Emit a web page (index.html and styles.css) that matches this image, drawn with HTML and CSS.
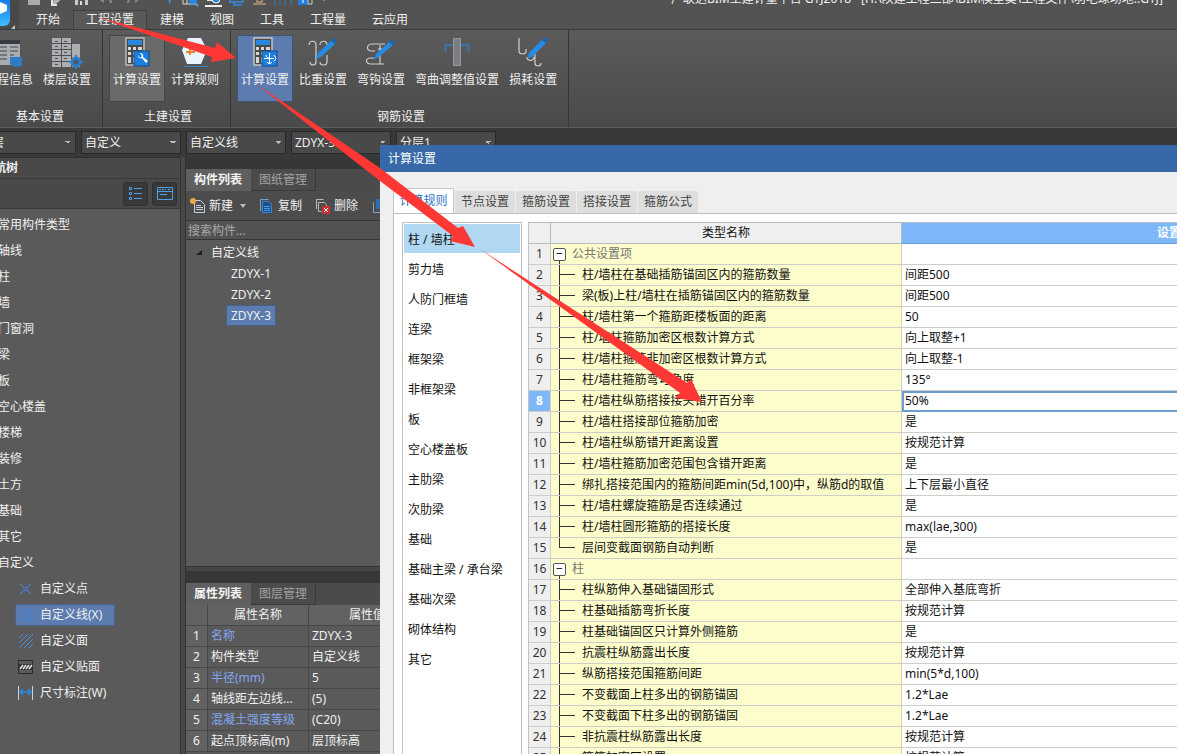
FILE: index.html
```html
<!DOCTYPE html>
<html lang="zh-CN">
<head>
<meta charset="utf-8">
<title>计算设置</title>
<link rel="stylesheet" href="styles.css">
</head>
<body>
<div class="desktop">
<div class="app">
  <header class="top">
    <div class="logo"><svg width="44" height="52" viewBox="0 0 44 52"><defs><linearGradient id="lg" x1="0" y1="0" x2="0" y2="1"><stop offset="0" stop-color="#0d63c8"/><stop offset=".6" stop-color="#1c8df0"/><stop offset="1" stop-color="#3fc0ff"/></linearGradient></defs><rect x="0" y="4" width="35" height="42" rx="6" fill="url(#lg)"/><path d="M25 22l7 3v6l-7 3z" fill="#fff"/><path d="M40 45v4h-4z" fill="#c8c8c8"/></svg></div>
    <div class="head-main">
      <div class="titlebar">
        <svg class="quick" width="300" height="16" viewBox="0 0 300 16">
          <path d="M1 0h12v14h-12z" fill="#a9acb0"/><path d="M3 3h8v6H3z" fill="#5d6065"/>
          <path d="M24 13l9-12 5 4-9 8z" fill="#aeb6c0"/><path d="M25 4v10h5" fill="none" stroke="#e2e2e2" stroke-width="2"/>
          <path d="M48 1h13v13H48z" fill="#c9c9c9"/><path d="M51 2h7v4h-7zM51 9h7v5h-7z" fill="#555"/><path d="M53 10h2v4h-2z" fill="#ddd"/>
          <path d="M84 12c0-5-5-6-9-6M77 2l-5 5 5 4" fill="none" stroke="#8b8b8b" stroke-width="2"/><path d="M89 6h5l-2.500 3z" fill="#aaa"/>
          <path d="M101 12c0-5 5-6 9-6M108 2l5 5-5 4" fill="none" stroke="#858585" stroke-width="2"/><path d="M121 6h5l-2.500 3z" fill="#aaa"/>
          <path d="M139 3l9 4-4 2-1 5-4-11z" fill="#3b8bd8"/>
          <path d="M156 1h12v12h-12zM156 5h12M160 1v12" fill="none" stroke="#d8dce0"/><circle cx="166" cy="9" r="4" fill="#2688e8"/><path d="M168 12l3 3" stroke="#4ca0ef" stroke-width="2"/>
          <path d="M180 1h12v9h-12z" fill="#e6e6e6"/><circle cx="189" cy="8" r="4" fill="#2a83d8" stroke="#fff"/><path d="M178 15h17" stroke="#eee" stroke-width="2"/>
          <path d="M203 2h13v9h-13zM207 11v3h8" fill="none" stroke="#387cc2" stroke-width="2"/>
          <path d="M226 13h13M230 8h5v3h-5z" fill="none" stroke="#b49b76" stroke-width="1.500"/>
          <path d="M246 5h20M248 2v13M253 5v9M258 2v13M264 5v9" fill="none" stroke="#3d7eb8"/>
          <path d="M271 2h10v12h-10z" fill="#247fda"/><path d="M276 4v8M272 8h8" stroke="#fff"/><path d="M281 4h4v9h-4z" fill="none" stroke="#ccc"/><path d="M294 6h6l-3 4z" fill="#ddd"/>
        </svg>
        <span class="doc-title">广联达BIM土建计量平台 GTJ2018 - [H:\陕建工程二部\BIM模型类\工程文件\羽毛球场地..GTJ]</span>
      </div>
      <nav class="menu"><button>开始</button><button class="on">工程设置</button><button>建模</button><button>视图</button><button>工具</button><button>工程量</button><button>云应用</button></nav>
    </div>
  </header>

  <section class="ribbon">
    <div class="group">
      <div class="tools">
        <button class="tool"><svg width="32" height="32" viewBox="0 0 32 32"><path d="M3 3h24v25H3z" fill="#a9acb0"/><path d="M3 3h24v4H3z" fill="#353b42"/><path d="M6 10h8M6 14h8M6 18h8M6 22h8M17 10h8M17 14h8M17 18h4" stroke="#3e4247"/><path d="M17 20h12v9l-8 1-4-3z" fill="#2d7cc4"/></svg>工程信息</button>
        <button class="tool"><svg width="32" height="32" viewBox="0 0 32 32"><path d="M1 1h19v29H1zM20 7h9v23h-9z" fill="#abadb1"/><path d="M1 6.500h19M1 12.500h19M1 18.500h19M1 24.500h19M10.500 1v29M20.500 1v29M4 4.500h3M13 4.500h3M4 9.500h3M13 9.500h3M4 15.500h3M13 15.500h3M4 21.500h3M13 21.500h3M4 27.500h3" stroke="#4d5055"/><circle cx="25" cy="25" r="4" fill="#4b5a68" stroke="#2b7fca" stroke-width="3"/><path d="M25 18v3M25 29v3M18 25h3M29 25h3" stroke="#2b7fca" stroke-width="2"/></svg>楼层设置</button>
      </div>
      <div class="caption">基本设置</div>
    </div>
    <div class="group">
      <div class="tools">
        <button class="tool hover"><svg width="32" height="32" viewBox="0 0 32 32"><path d="M5 1h18v27H5z" fill="#4a4a4a" stroke="#bcbcbc" stroke-width="1.500"/><path d="M7 3h14v5H7z" fill="#2b86dd"/><path d="M7 10h3v3H7zM12 10h3v3h-3zM17 10h4v3h-4zM7 15h3v3H7zM12 15h3v3h-3zM7 20h3v6H7zM12 20h2v6h-2z" fill="#d7d7d7"/><path d="M13 14h15v15H13z" fill="#1a80e2" stroke="#174a80"/><path d="M17 18c0 3 2 4 4 3l4 5 2-2-5-4c1-2-1-4-3-4l2 3-2 2z" fill="#fff"/></svg>计算设置</button>
        <button class="tool"><svg width="32" height="32" viewBox="0 0 32 32"><path d="M9 1h13l6 12-6 14H8L3 13z" fill="#e9f4ff"/><path d="M7 15h9M11 10v8" stroke="#e78424" stroke-width="2"/><path d="M5 29.500h24" stroke="#3e87c7"/></svg>计算规则</button>
      </div>
      <div class="caption">土建设置</div>
    </div>
    <div class="group">
      <div class="tools">
        <button class="tool on"><svg width="32" height="32" viewBox="0 0 32 32"><path d="M5 1h18v27H5z" fill="#4a4a4a" stroke="#c6c6c6" stroke-width="1.500"/><path d="M7 3h14v5H7z" fill="#2b86dd"/><path d="M7 10h3v3H7zM12 10h3v3h-3zM17 10h4v3h-4zM7 15h3v3H7zM12 15h3v3h-3zM7 20h3v6H7zM12 20h2v6h-2z" fill="#d7d7d7"/><path d="M13 14h15v15H13z" fill="#1a80e2" stroke="#174a80"/><path d="M15 21.500h10M20.500 16v11M17 18c0 2 1 3 3 3M25 18l2 3.500-2 3M18 25c1 2 4 2 5 0" fill="none" stroke="#fff"/></svg>计算设置</button>
        <button class="tool"><svg width="32" height="32" viewBox="0 0 32 32"><path d="M2 8c0-5 7-5 7 0v17c0 4-6 4-6 0M13 8c0-5 7-5 7 0M20 18v7c0 4-7 4-7 0" fill="none" stroke="#cfcfcf" stroke-width="1.200"/><path d="M9 22l2-6L24 4l4 3-14 13z" fill="#258be5"/><path d="M24 4l3-3 3 3-2 3z" fill="#1667ae"/></svg>比重设置</button>
        <button class="tool"><svg width="32" height="32" viewBox="0 0 32 32"><path d="M20 7H7c-6 0-6 7 0 7h3M19 27H6c-6 0-6-6 0-6h3M15 8v19M13 12h5" fill="none" stroke="#cfcfcf" stroke-width="1.200"/><path d="M9 23l2-6L24 5l4 3-14 12z" fill="#258be5"/><path d="M24 5l3-3 3 3-2 3z" fill="#1667ae"/></svg>弯钩设置</button>
        <button class="tool"><svg width="32" height="32" viewBox="0 0 32 32"><path d="M4.500 15V8h23v7" fill="none" stroke="#2c7fc8" stroke-width="1.500"/><path d="M12.500 1.500h7v27h-7z" fill="#7b7f84" stroke="#96999c"/></svg>弯曲调整值设置</button>
        <button class="tool"><svg width="32" height="32" viewBox="0 0 32 32"><path d="M2 1v13c0 4 7 4 7 0v-2M10 20c0 4 6 5 7 0M18 17v9c0 4 6 4 6 0" fill="none" stroke="#cfcfcf" stroke-width="1.200"/><path d="M10 21l2-5L25 3l4 3-14 14z" fill="#258be5"/><path d="M25 3l3-3 3 3-2 3z" fill="#1667ae"/></svg>损耗设置</button>
      </div>
      <div class="caption">钢筋设置</div>
    </div>
  </section>

  <div class="pickers">
    <select aria-label="楼层"><option>首层</option></select>
    <select aria-label="类别"><option>自定义</option></select>
    <select aria-label="类型"><option>自定义线</option></select>
    <select aria-label="构件"><option>ZDYX-3</option></select>
    <select aria-label="分层"><option>分层1</option></select>
  </div>

  <div class="work">
    <aside class="navtree">
      <h2>导航树</h2>
      <div class="nav-tools">
        <button aria-label="列表"><svg width="16" height="16" viewBox="0 0 16 16" fill="none" stroke="#4d9fe6"><path d="M1.500 1.500h2v2h-2zM1.500 6.500h2v2h-2zM1.500 11.500h2v2h-2zM6 2.500h8M6 7.500h8M6 12.500h8"/></svg></button>
        <button aria-label="面板"><svg width="16" height="16" viewBox="0 0 16 16" fill="none" stroke="#4d9fe6"><path d="M.5 1.500h15v12H.5zM.5 5.500h15M3 8.500h7"/><path d="M2 3.500h7M11 3.500h3" stroke-dasharray="2 1"/></svg></button>
      </div>
      <ul class="kinds">
        <li>常用构件类型</li><li>轴线</li><li>柱</li><li>墙</li><li>门窗洞</li><li>梁</li><li>板</li><li>空心楼盖</li><li>楼梯</li><li>装修</li><li>土方</li><li>基础</li><li>其它</li><li>自定义</li>
        <li class="sub"><span><svg width="16" height="16" viewBox="0 0 16 16"><path d="M2 3l11 10M13 3L2 13" stroke="#5b86e0" fill="none"/><path d="M6 6.500h3v3H6z" fill="#5a5a5a" stroke="#3f7be0"/></svg>自定义点</span></li>
        <li class="sub on"><span><svg width="16" height="16" viewBox="0 0 16 16"><path d="M3 3h10v10H3z" fill="none" stroke="#4180d0" stroke-dasharray="3 2" stroke-width="2"/></svg>自定义线(X)</span></li>
        <li class="sub"><span><svg width="16" height="16" viewBox="0 0 16 16"><path d="M1 5l4-4M1 10l9-9M1 15L15 1M6 15l9-9M11 15l4-4" stroke="#4a90d6"/></svg>自定义面</span></li>
        <li class="sub"><span><svg width="16" height="16" viewBox="0 0 16 16"><path d="M.5 1.500h14v13H.5z" fill="#5a5a5a" stroke="#2c2c2c"/><path d="M1 5h13v6H1z" fill="#333"/><path d="M2 10l3-4M5 10l3-4M8 10l3-4M11 10l3-4" stroke="#e5e5e5" stroke-width="1.500"/></svg>自定义贴面</span></li>
        <li class="sub"><span><svg width="16" height="16" viewBox="0 0 16 16"><path d="M.5 1v14M14.500 1v14" stroke="#c9d4de"/><path d="M2 7h11M5 4L2 7l3 3M10 4l3 3-3 3" fill="none" stroke="#2c8ae8" stroke-width="1.500"/></svg>尺寸标注(W)</span></li>
      </ul>
    </aside>

    <div class="side">
      <section class="pane members">
        <div class="pane-tabs"><button class="on">构件列表</button><button>图纸管理</button></div>
        <div class="pane-tools">
          <button><svg width="16" height="16" viewBox="0 0 16 16"><path d="M4.500 2.500h6l4 4v8h-10zM6 7.500h5M6 9.500h7M6 11.500h7" fill="#4a4f55" stroke="#c9ccd0"/><circle cx="3" cy="3" r="3" fill="#f0a640"/></svg>新建<svg class="caret" width="6" height="4" viewBox="0 0 6 4"><path d="M0 0h6L3 4z" fill="#bbb"/></svg></button>
          <button><svg width="16" height="16" viewBox="0 0 16 16"><path d="M1.500 13V1.500h8" fill="none" stroke="#6fa4d8"/><path d="M3.500 3.500h6l3 3v8h-9z" fill="#234d7d" stroke="#2f86dc"/><path d="M5 8.500h6M5 10.500h6M5 12.500h6" stroke="#4a9be6"/></svg>复制</button>
          <button><svg width="16" height="16" viewBox="0 0 16 16"><path d="M1.500 11V1.500h7M3.500 13.500V4.500h6l2 2v2M3.500 13.500h3" fill="none" stroke="#b9b9b9"/><path d="M7 8h8v8H7z" fill="#c92f33"/><path d="M9 10l4 4M13 10l-4 4" stroke="#fff"/></svg>删除</button>
          <button aria-label="层间复制"><svg width="16" height="16" viewBox="0 0 16 16"><path d="M5 1h9v10H5z" fill="#2f6fae"/><path d="M2.500 4v10.500h9" fill="none" stroke="#7ea2c6"/></svg></button>
        </div>
        <input class="search" type="text" placeholder="搜索构件..." aria-label="搜索构件">
        <ul class="tree">
          <li class="root"><svg width="7" height="7" viewBox="0 0 7 7"><path d="M6 1v5H0z" fill="#1f1f1f"/></svg>自定义线</li>
          <li><span>ZDYX-1</span></li><li><span>ZDYX-2</span></li><li><span class="on">ZDYX-3</span></li>
        </ul>
      </section>
      <section class="pane props">
        <div class="pane-tabs"><button class="on">属性列表</button><button>图层管理</button></div>
        <table>
          <colgroup><col class="c-no"><col class="c-key"><col></colgroup>
          <tr><th></th><th>属性名称</th><th>属性值</th></tr>
          <tr><th>1</th><td class="key">名称</td><td>ZDYX-3</td></tr>
          <tr><th>2</th><td>构件类型</td><td>自定义线</td></tr>
          <tr><th>3</th><td class="key">半径(mm)</td><td>5</td></tr>
          <tr><th>4</th><td>轴线距左边线...</td><td>(5)</td></tr>
          <tr><th>5</th><td class="key">混凝土强度等级</td><td>(C20)</td></tr>
          <tr><th>6</th><td>起点顶标高(m)</td><td>层顶标高</td></tr>
        </table>
      </section>
    </div>
  </div>
</div>

<div class="dialog" role="dialog" aria-labelledby="dlg">
  <h1 id="dlg">计算设置</h1>
  <div class="dlg-body">
    <div class="dlg-tabs"><button class="on">计算规则</button><button>节点设置</button><button>箍筋设置</button><button>搭接设置</button><button>箍筋公式</button></div>
    <div class="dlg-page">
      <ul class="cats">
        <li class="on">柱 / 墙柱</li><li>剪力墙</li><li>人防门框墙</li><li>连梁</li><li>框架梁</li><li>非框架梁</li><li>板</li><li>空心楼盖板</li><li>主肋梁</li><li>次肋梁</li><li>基础</li><li>基础主梁 / 承台梁</li><li>基础次梁</li><li>砌体结构</li><li>其它</li>
      </ul>
      <div class="grid">
        <table>
          <colgroup><col class="g-no"><col class="g-name"><col></colgroup>
          <tr class="hd"><th></th><th>类型名称</th><th class="sel">设置内容</th></tr>
          <tr class="cat"><th>1</th><td><button aria-label="收起">−</button>公共设置项</td><td></td></tr>
          <tr><th>2</th><td>柱/墙柱在基础插筋锚固区内的箍筋数量</td><td>间距500</td></tr>
          <tr><th>3</th><td>梁(板)上柱/墙柱在插筋锚固区内的箍筋数量</td><td>间距500</td></tr>
          <tr><th>4</th><td>柱/墙柱第一个箍筋距楼板面的距离</td><td>50</td></tr>
          <tr><th>5</th><td>柱/墙柱箍筋加密区根数计算方式</td><td>向上取整+1</td></tr>
          <tr><th>6</th><td>柱/墙柱箍筋非加密区根数计算方式</td><td>向上取整-1</td></tr>
          <tr><th>7</th><td>柱/墙柱箍筋弯勾角度</td><td>135°</td></tr>
          <tr class="cur"><th>8</th><td>柱/墙柱纵筋搭接接头错开百分率</td><td>50%</td></tr>
          <tr><th>9</th><td>柱/墙柱搭接部位箍筋加密</td><td>是</td></tr>
          <tr><th>10</th><td>柱/墙柱纵筋错开距离设置</td><td>按规范计算</td></tr>
          <tr><th>11</th><td>柱/墙柱箍筋加密范围包含错开距离</td><td>是</td></tr>
          <tr><th>12</th><td>绑扎搭接范围内的箍筋间距min(5d,100)中，纵筋d的取值</td><td>上下层最小直径</td></tr>
          <tr><th>13</th><td>柱/墙柱螺旋箍筋是否连续通过</td><td>是</td></tr>
          <tr><th>14</th><td>柱/墙柱圆形箍筋的搭接长度</td><td>max(lae,300)</td></tr>
          <tr class="last"><th>15</th><td>层间变截面钢筋自动判断</td><td>是</td></tr>
          <tr class="cat"><th>16</th><td><button aria-label="收起">−</button>柱</td><td></td></tr>
          <tr><th>17</th><td>柱纵筋伸入基础锚固形式</td><td>全部伸入基底弯折</td></tr>
          <tr><th>18</th><td>柱基础插筋弯折长度</td><td>按规范计算</td></tr>
          <tr><th>19</th><td>柱基础锚固区只计算外侧箍筋</td><td>是</td></tr>
          <tr><th>20</th><td>抗震柱纵筋露出长度</td><td>按规范计算</td></tr>
          <tr><th>21</th><td>纵筋搭接范围箍筋间距</td><td>min(5*d,100)</td></tr>
          <tr><th>22</th><td>不变截面上柱多出的钢筋锚固</td><td>1.2*Lae</td></tr>
          <tr><th>23</th><td>不变截面下柱多出的钢筋锚固</td><td>1.2*Lae</td></tr>
          <tr><th>24</th><td>非抗震柱纵筋露出长度</td><td>按规范计算</td></tr>
          <tr><th>25</th><td>箍筋加密区设置</td><td>按规范计算</td></tr>
        </table>
      </div>
    </div>
  </div>
</div>

<svg class="arrows" width="1177" height="754" viewBox="0 0 1177 754" fill="#fd3834">
  <path d="M97 17L215 48L217 42L236 58L211 62L212 57Z"/>
  <path d="M255 83L380 168L458 228L463 226L475 247L450 241L453 236L380 181Z"/>
  <path d="M480 249L687 383L691 379L702 402L675 398L680 393Z"/>
</svg>
</div>
</body>
</html>
```
FILE: styles.css
```css
* { box-sizing: border-box; }
body {
  margin: 0;
  font: 12px/20px "Noto Sans", "Noto Sans CJK SC", sans-serif;
  color: #f0f0f0;
  background: #393939;
}
button, input, select { font: inherit; color: inherit; border: 0; padding: 0; margin: 0; background: none; }
ul { list-style: none; margin: 0; padding: 0; }
h1, h2 { margin: 0; font-size: 12px; }
svg { flex: none; display: block; }
table { border-collapse: separate; border-spacing: 0; table-layout: fixed; width: 100%; }

.desktop { position: relative; height: 100vh; overflow: hidden; }
/* The main window runs off the top-left of the desktop. */
.app { margin: -20px 0 0 -25px; display: flex; flex-direction: column; height: calc(100vh + 20px); }

.top { display: flex; height: 50px; background: #535353; border-bottom: 1px solid #3c3c3c; }
.logo { width: 44px; overflow: hidden; background: #484848; }
.head-main { flex: 1; min-width: 0; padding-left: 4px; display: flex; flex-direction: column; }
.titlebar { height: 31px; padding-top: 8px; display: flex; align-items: center; gap: 344px; padding-left: 4px; overflow: hidden; }
.doc-title { white-space: nowrap; }
.menu { display: flex; height: 19px; }
.menu button { padding: 0 13px; line-height: 20px; }
.menu .on { background: #595959; border: 1px solid #404040; border-bottom: 0; padding: 0 12px; line-height: 18px; }

.ribbon { display: flex; height: 98px; background: linear-gradient(#5b5b5b, #4a4a4a); border-bottom: 1px solid #5c5c5c; }
.group { display: flex; flex-direction: column; padding: 5px 7px 0 6px; border-right: 1px solid #353535; }
.tools { display: flex; gap: 2px; }
.tool { display: flex; flex-direction: column; align-items: center; height: 67px; padding: 1px 3px 0; border: 1px solid transparent; white-space: nowrap; }
.tool svg { margin-bottom: 1px; }
.tool.hover { background: #6a6a6a; border-color: #454545; }
.tool.on { background: #5c7caf; border-color: #3f5271; }
.caption { text-align: center; padding: 5px 0 0 4px; }

.pickers { display: flex; gap: 5px; padding: 3px 0 3px 1px; height: 29px; background: #393939; }
.pickers select {
  width: 100px; height: 23px; padding: 0 3px; appearance: none; border: 1px solid #292929;
  background: linear-gradient(45deg, transparent 50%, #bbb 50%) 88px 9px / 3px 3px no-repeat,
    linear-gradient(-45deg, transparent 50%, #bbb 50%) 91px 9px / 3px 3px no-repeat, #494949;
  border-radius: 0;
}

.work { flex: 1; min-height: 0; display: flex; gap: 4px; background: #474747; }
.navtree { width: 206px; background: #5a5a5a; border-right: 1px solid #333; border-top: 1px solid #2e2e2e; }
.navtree h2 { padding-left: 7px; background: #494949; border-bottom: 1px solid #383838; height: 21px; line-height: 19px; }
.nav-tools { display: flex; justify-content: flex-end; gap: 4px; height: 30px; padding: 3px 3px 0; background: #494949; border-bottom: 1px solid #3a3a3a; }
.nav-tools button { width: 25px; height: 24px; display: grid; place-items: center; background: #393939; border: 1px solid #303030; border-radius: 3px; }
.kinds { padding-top: 3px; }
.kinds li { height: 26px; line-height: 26px; padding-left: 23px; white-space: nowrap; }
.kinds .sub { display: flex; align-items: center; padding-left: 40px; }
.kinds .sub span { display: flex; align-items: center; gap: 6px; height: 22px; line-height: 20px; padding: 0 13px 0 3px; }
.kinds .sub.on span { background: #5c7caf; outline: 1px solid #4a628a; outline-offset: -1px; }

.side { width: 241px; flex: none; display: flex; flex-direction: column; gap: 4px; border-left: 1px solid #333; }
.pane { background: #5a5a5a; border-top: 12px solid #373737; display: flex; flex-direction: column; }
.members { height: 410px; border-bottom: 1px solid #333; }
.props { flex: 1; min-height: 0; overflow: hidden; }
.pane-tabs { display: flex; height: 22px; flex: none; background: #4b4b4b; }
.pane-tabs button { width: 65px; color: #a2a2a2; border-right: 1px solid #393939; border-bottom: 1px solid #393939; }
.pane-tabs .on { background: #5f5f5f; color: #f4f4f4; font-weight: bold; border-color: #5f5f5f; }
.pane-tools { display: flex; gap: 13px; align-items: center; height: 30px; padding-left: 4px; background: #4c4c4c; border-bottom: 1px solid #353535; flex: none; overflow: hidden; }
.pane-tools button { display: flex; align-items: center; gap: 3px; white-space: nowrap; flex: none; }
.pane-tools .caret { margin-left: 4px; }
.search { height: 19px; line-height: 18px; padding-left: 2px; width: 100%; background: #525252; border-bottom: 1px solid #353535; outline: 0; }
.search::placeholder { color: #a9a9a9; }
.tree { padding-top: 2px; }
.tree li { height: 21px; padding-left: 41px; display: flex; align-items: center; }
.tree .root { padding-left: 10px; gap: 8px; }
.tree span { line-height: 19px; padding: 0 4px; }
.tree .on { background: #5c7caf; outline: 1px solid #47608a; }
.props table { line-height: 20px; }
.c-no { width: 22px; }
.c-key { width: 101px; }
.props th, .props td { height: 21px; padding: 0 3px; border-right: 1px solid #474747; border-bottom: 1px solid #474747; font-weight: normal; white-space: nowrap; overflow: hidden; }
.props th { background: #626262; padding: 0; }
.props .key { color: #82a7f2; }

/* The dialog reaches past the right and bottom edges of the desktop. */
.dialog { position: absolute; left: 380px; top: 145px; right: -293px; bottom: -20px; display: flex; flex-direction: column; background: #efeff0; color: #111; overflow: hidden; }
.dialog h1 { flex: none; height: 27px; line-height: 27px; padding-left: 8px; background: #3769a8; color: #fff; font-weight: normal; }
.dlg-body { flex: 1; min-height: 0; padding: 16px 0 0 13px; display: flex; flex-direction: column; }
.dlg-tabs { display: flex; align-items: flex-end; gap: 1px; height: 25px; flex: none; }
.dlg-tabs button { width: 60px; height: 22px; line-height: 22px; background: #dedede; color: #444; border-radius: 2px 2px 0 0; }
.dlg-tabs .on { width: 61px; height: 25px; line-height: 24px; background: #fff; color: #2c74c4; border: 1px solid #c2c6ca; border-bottom: 0; }
.dlg-page { flex: 1; min-height: 0; border: 1px solid #b9bfc6; background: #fff; padding: 8px 8px 0; display: flex; gap: 6px; }
.cats { width: 120px; flex: none; border: 1px solid #c0c0c0; padding: 1px; }
.cats li { height: 30px; padding: 6px 4px 4px; white-space: nowrap; }
.cats .on { background: #b0d8f3; height: 29px; margin-bottom: 1px; }
.grid { flex: 1; min-width: 0; overflow: hidden; border-left: 1px solid #c2c2c2; border-top: 1px solid #b5bcc4; }
.g-no { width: 22px; }
.g-name { width: 351px; }
.grid th, .grid td { height: 21px; line-height: 20px; padding: 0; border-right: 1px solid #cfcfc4; border-bottom: 1px solid #cdcdc9; white-space: nowrap; overflow: hidden; }
.grid th { background: #efefef; font-weight: normal; color: #333; }
.grid .hd th { line-height: 20px; border-color: #b5bcc4; color: #111; }
.grid .hd .sel { background: #7fb8f9; color: #fff; font-weight: bold; border-color: #669fd8; }
.grid td:nth-child(2) {
  padding-left: 31px;
  background: linear-gradient(#333, #333) 8px 0 / 1px 100% no-repeat, linear-gradient(#333, #333) 8px 9px / 16px 1px no-repeat, #fdfdcb;
}
.grid .last td:nth-child(2) {
  background: linear-gradient(#333, #333) 8px 0 / 1px 10px no-repeat, linear-gradient(#333, #333) 8px 9px / 16px 1px no-repeat, #fdfdcb;
}
.grid .cat td:nth-child(2) { padding-left: 2px; color: #777; background: linear-gradient(#333, #333) 8px 16px / 1px 5px no-repeat, #fdfdcb; }
.grid .cat button { width: 13px; height: 13px; line-height: 10px; margin-right: 6px; border: 1px solid #555; border-radius: 2px; background: #fff; color: #111; vertical-align: 0; }
.grid td:nth-child(3) { padding-left: 3px; }
.grid .cur th { background: #7fb8f9; color: #fff; font-weight: bold; }
.grid .cur td:nth-child(3) { outline: 2px solid #6d9ecf; outline-offset: -2px; }

.arrows { position: absolute; left: 0; top: 0; pointer-events: none; }
```
